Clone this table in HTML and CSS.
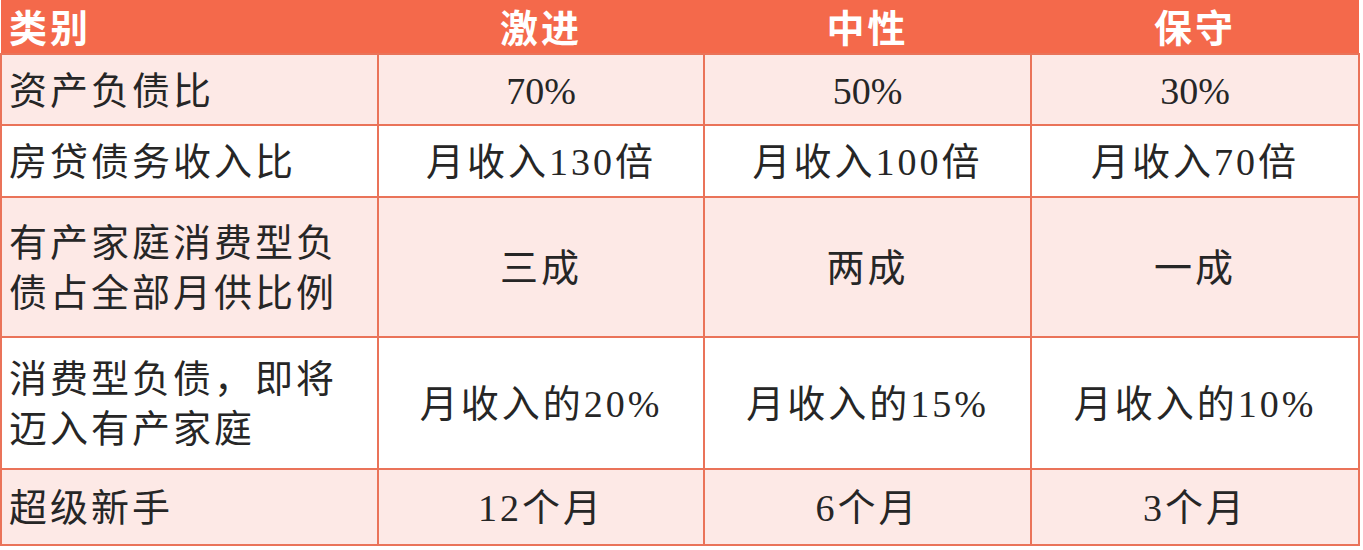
FILE: index.html
```html
<!DOCTYPE html>
<html lang="zh">
<head>
<meta charset="utf-8">
<title>负债比例</title>
<link rel="stylesheet" href="styles.css">
</head>
<body>
<table class="ratio">
  <colgroup>
    <col class="c1"><col class="c2"><col class="c3"><col class="c4">
  </colgroup>
  <thead>
    <tr class="head">
      <th class="first">类别</th>
      <th>激进</th>
      <th>中性</th>
      <th>保守</th>
    </tr>
  </thead>
  <tbody>
    <tr class="r1 pink">
      <td class="first">资产负债比</td>
      <td class="num">70%</td>
      <td class="num">50%</td>
      <td class="num">30%</td>
    </tr>
    <tr class="r2">
      <td class="first">房贷债务收入比</td>
      <td>月收入130倍</td>
      <td>月收入100倍</td>
      <td>月收入70倍</td>
    </tr>
    <tr class="r3 pink">
      <td class="first">有产家庭消费型负<br>债占全部月供比例</td>
      <td>三成</td>
      <td>两成</td>
      <td>一成</td>
    </tr>
    <tr class="r4">
      <td class="first">消费型负债，即将<br>迈入有产家庭</td>
      <td>月收入的20%</td>
      <td>月收入的15%</td>
      <td>月收入的10%</td>
    </tr>
    <tr class="r5 pink">
      <td class="first">超级新手</td>
      <td>12个月</td>
      <td>6个月</td>
      <td>3个月</td>
    </tr>
  </tbody>
</table>
</body>
</html>
```

FILE: styles.css
```css
html, body {
  margin: 0;
  padding: 0;
  background: #ffffff;
}

.ratio {
  border-collapse: collapse;
  table-layout: fixed;
  width: 1358px;
  font-family: "Liberation Serif", "Noto Sans CJK SC", serif;
  font-size: 38px;
  letter-spacing: 3px;
  line-height: 50px;
  color: #262626;
}

.c1 { width: 377px; }
.c2 { width: 326px; }
.c3 { width: 327px; }
.c4 { width: 328px; }

.head {
  height: 54px;
  background: #f4694b;
}

.head th {
  color: #ffffff;
  font-weight: 700;
  text-align: center;
  vertical-align: bottom;
  padding: 0 0 1px 0;
  border: none;
  line-height: 46px;
}

.head th.first {
  text-align: left;
  padding-left: 8px;
}

td {
  border: 2px solid #ea7359;
  text-align: center;
  vertical-align: middle;
  padding: 2px 0 0 0;
  font-weight: 400;
}

td.first {
  text-align: left;
  padding-left: 7px;
}

td.num {
  letter-spacing: 0;
}

.pink td {
  background: #fde9e6;
}

.r1 { height: 71px; }
.r2 { height: 72px; }
.r3 { height: 140px; }
.r4 { height: 132px; }
.r5 { height: 76px; }
```
